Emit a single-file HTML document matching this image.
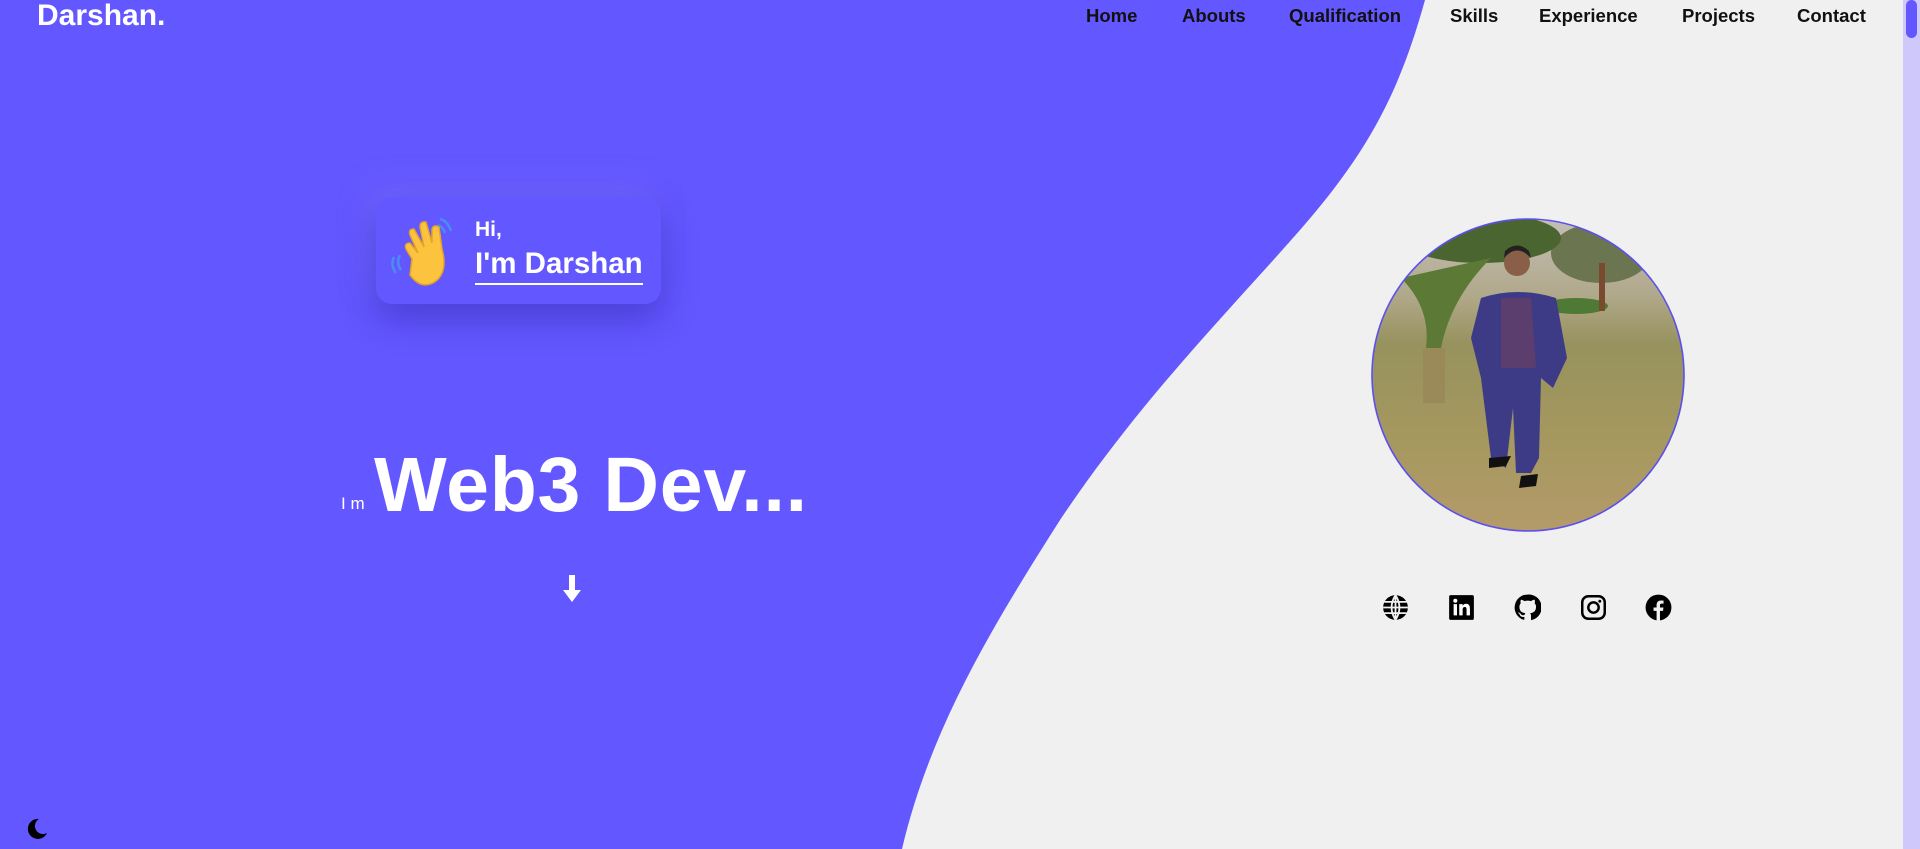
<!DOCTYPE html>
<html><head><meta charset="utf-8"><style>
html,body{margin:0;padding:0;width:1920px;height:849px;overflow:hidden;background:#f0f0f0;font-family:"Liberation Sans",sans-serif}
.bg{position:absolute;left:0;top:0}
.logo{position:absolute;left:37px;top:-1px;color:#fff;font-weight:bold;font-size:30px;letter-spacing:0px}
.nav{position:absolute;top:5px;font-weight:bold;font-size:18.5px;color:#111}
.card{position:absolute;left:376px;top:197px;width:285px;height:107px;border-radius:16px;background:#6357ff;box-shadow:0 14px 34px rgba(40,30,160,.45),-8px -10px 30px rgba(140,130,255,.35)}
.hi{position:absolute;left:99px;top:21px;color:#fff;font-weight:bold;font-size:21px}
.name{position:absolute;left:99px;top:51px;color:#fff;font-weight:bold;font-size:29.5px;letter-spacing:0px;border-bottom:2px solid #fff;padding-bottom:3px;line-height:32px}
.im{position:absolute;left:341px;top:494px;color:#fff;font-size:17px}
.big{position:absolute;left:374px;top:440px;color:#fff;font-weight:bold;font-size:77px;letter-spacing:0.8px;line-height:90px}
.scroll{position:absolute;left:1903px;top:0;width:17px;height:849px;background:#cfc9fb}
.thumb{position:absolute;left:1906px;top:0;width:11px;height:38px;border-radius:6px;background:#6357ff}
.ic{position:absolute;top:594px;width:27px;height:27px}
</style></head><body>
<svg class="bg" width="1920" height="849"><path d="M0 0 H1425 C1400 90 1370 150 1300 230 C1230 310 1140 400 1060 520 C990 630 930 730 902 849 H0 Z" fill="#6357ff"/></svg>
<div class="logo">Darshan.</div>
<div class="nav" style="left:1086px">Home</div>
<div class="nav" style="left:1182px">Abouts</div>
<div class="nav" style="left:1289px">Qualification</div>
<div class="nav" style="left:1450px">Skills</div>
<div class="nav" style="left:1539px">Experience</div>
<div class="nav" style="left:1682px">Projects</div>
<div class="nav" style="left:1797px">Contact</div>
<div class="card">
<svg style="position:absolute;left:12px;top:16px" width="80" height="76" viewBox="0 0 80 76">
<path d="M6 44 Q2 52 8 60 M12 42 Q8 50 13 57" stroke="#4a8df0" stroke-width="2.5" fill="none"/>
<path d="M52 6 Q60 8 63 18 M50 12 Q55 14 57 20" stroke="#4a8df0" stroke-width="2.5" fill="none"/>
<path d="M24 46 L18 36 Q16 30 22 30 L30 40 L22 22 Q20 16 26 16 L36 34 L32 14 Q32 8 38 9 L44 30 L44 16 Q46 11 51 14 L54 36 Q60 58 48 68 Q34 78 22 62 Z" fill="#fcc43e" stroke="#e7a325" stroke-width="1.5"/>
</svg>
<div class="hi">Hi,</div>
<div class="name">I'm Darshan</div>
</div>
<div class="im">I m</div>
<div class="big">Web3 Dev...</div>
<svg style="position:absolute;left:562px;top:575px" width="20" height="29" viewBox="0 0 20 29"><rect x="7" y="0" width="6" height="17" fill="#fff"/><path d="M1 15 H19 L10 27 Z" fill="#fff"/></svg>
<svg style="position:absolute;left:1371px;top:218px" width="314" height="314" viewBox="0 0 314 314">
<defs><clipPath id="c"><circle cx="157" cy="157" r="156"/></clipPath>
<linearGradient id="g" x1="0" y1="0" x2="0" y2="1"><stop offset="0" stop-color="#c4bfb8"/><stop offset=".25" stop-color="#b0a88a"/><stop offset=".4" stop-color="#97925e"/><stop offset=".7" stop-color="#a5985f"/><stop offset="1" stop-color="#b49a6a"/></linearGradient></defs>
<g clip-path="url(#c)">
<rect width="314" height="314" fill="url(#g)"/>
<ellipse cx="230" cy="35" rx="50" ry="30" fill="#6b7550"/>
<ellipse cx="110" cy="20" rx="80" ry="25" fill="#4a6530"/>
<path d="M30 60 Q60 90 55 130 L70 130 Q80 80 120 40 Z" fill="#5c7a36"/>
<rect x="52" y="130" width="22" height="55" fill="#9a8a5a"/>
<ellipse cx="205" cy="88" rx="32" ry="8" fill="#4f7a35"/>
<rect x="228" y="45" width="6" height="48" fill="#7a4a30"/>
<circle cx="146" cy="45" r="13" fill="#8a5f48"/>
<path d="M133 40 Q146 25 160 40 L158 33 Q146 22 134 33 Z" fill="#222"/>
<path d="M110 80 Q146 68 185 80 L196 140 L182 170 L170 160 L168 240 L160 255 L145 255 L142 190 L135 250 L120 240 L110 160 L100 120 Z" fill="#3e3b86"/>
<path d="M130 80 L160 80 L165 150 L130 150 Z" fill="#5b3d6e"/>
<path d="M118 240 L140 238 L135 248 L118 250 Z M150 258 L167 256 L165 268 L148 270 Z" fill="#111"/>
</g>
<circle cx="157" cy="157" r="156" fill="none" stroke="#5a50f0" stroke-width="1.6"/>
</svg>
<svg class="ic" style="left:1382px" viewBox="0 0 24 24"><circle cx="12" cy="12" r="11" fill="#000"/><path d="M1 12H23M2 7H22M2 17H22M12 1V23M12 1Q5 12 12 23M12 1Q19 12 12 23" stroke="#f0f0f0" stroke-width="1.6" fill="none"/></svg>
<svg class="ic" style="left:1448px" viewBox="0 0 24 24"><rect x="1" y="1" width="22" height="22" rx="1.5" fill="#000"/><rect x="5" y="9" width="3" height="10" fill="#fff"/><circle cx="6.5" cy="6" r="1.8" fill="#fff"/><path d="M10 9H13V10.5Q14 8.7 16.3 8.7Q19.5 8.7 19.5 13V19H16.5V13.5Q16.5 11.5 15 11.5Q13 11.5 13 13.8V19H10Z" fill="#fff"/></svg>
<svg class="ic" style="left:1514px" viewBox="0 0 24 24"><path d="M12 .5A11.5 11.5 0 0 0 8.4 22.9c.6.1.8-.3.8-.6v-2c-3.2.7-3.9-1.5-3.9-1.5-.5-1.3-1.3-1.7-1.3-1.7-1-.7.1-.7.1-.7 1.2.1 1.8 1.2 1.8 1.2 1 1.8 2.8 1.3 3.5 1 .1-.8.4-1.300.7-1.6-2.6-.3-5.3-1.3-5.3-5.7 0-1.3.5-2.3 1.2-3.1-.1-.3-.5-1.5.1-3.1 0 0 1-.3 3.2 1.2a11 11 0 0 1 5.8 0c2.2-1.5 3.2-1.2 3.2-1.2.6 1.6.2 2.8.1 3.1.7.8 1.2 1.8 1.2 3.1 0 4.4-2.7 5.4-5.3 5.7.4.4.8 1.1.8 2.2v3.3c0 .3.2.7.8.6A11.5 11.5 0 0 0 12 .5z" fill="#000"/></svg>
<svg class="ic" style="left:1580px" viewBox="0 0 24 24"><rect x="2" y="2" width="20" height="20" rx="5.5" fill="none" stroke="#000" stroke-width="2.2"/><circle cx="12" cy="12" r="4.6" fill="none" stroke="#000" stroke-width="2.2"/><circle cx="17.6" cy="6.4" r="1.3" fill="#000"/></svg>
<svg class="ic" style="left:1645px" viewBox="0 0 24 24"><circle cx="12" cy="12" r="11.5" fill="#000"/><path d="M13.3 23.5V15H16L16.4 12H13.3V10.1C13.3 9.2 13.6 8.6 14.9 8.6H16.5V5.9Q15.5 5.8 14.3 5.8C11.9 5.8 10.3 7.2 10.3 9.8V12H7.6V15H10.3V23.5Z" fill="#f0f0f0"/></svg>
<svg style="position:absolute;left:25px;top:817px" width="24" height="24" viewBox="0 0 24 24"><path d="M14 2A10 10 0 1 0 22 16A8 8 0 0 1 14 2Z" fill="#000"/></svg>
<div class="scroll"></div><div class="thumb"></div>
</body></html>
